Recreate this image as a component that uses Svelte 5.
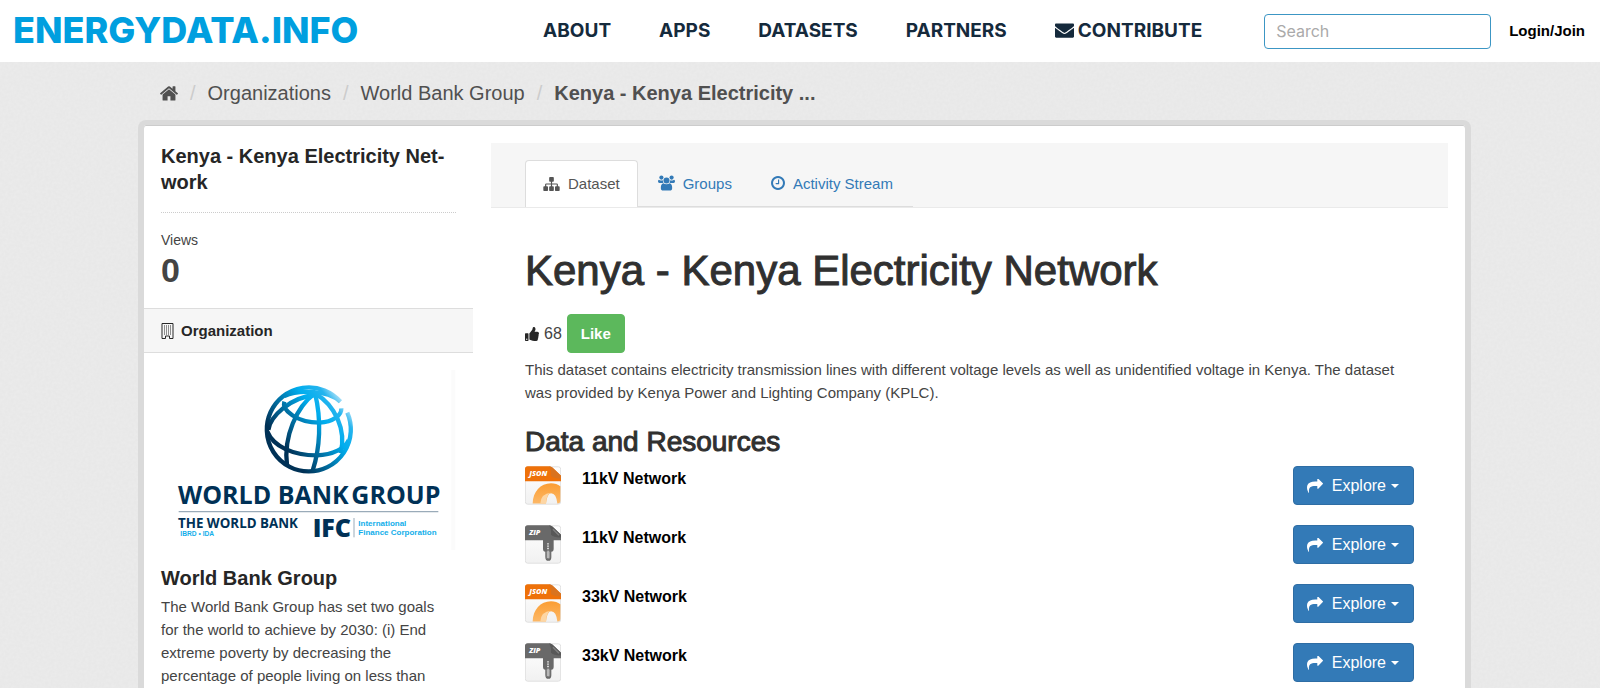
<script>
  const links = ['ABOUT', 'APPS', 'DATASETS', 'PARTNERS'];
  const resources = [
    { type: 'JSON', name: '11kV Network' },
    { type: 'ZIP', name: '11kV Network' },
    { type: 'JSON', name: '33kV Network' },
    { type: 'ZIP', name: '33kV Network' }
  ];
</script>

<div class="page">
  <header>
    <a class="brand" href="#home">ENERGYDATA.INFO</a>
    <nav aria-label="Main">
      {#each links as link}
        <a href="#{link.toLowerCase()}">{link}</a>
      {/each}
      <a href="#contribute">
        <svg class="mail" viewBox="0 0 512 512" aria-hidden="true"><path d="M502.3 190.8c3.900-3.100 9.700-.2 9.700 4.700V416c0 18-14 32-32 32H32c-18 0-32-14-32-32V195.600c0-5 5.700-7.800 9.700-4.700 22.400 17.400 52.100 39.500 154.100 113.600 21.100 15.400 56.700 47.800 92.200 47.600 35.700.3 72-32.800 92.300-47.600 102-74.100 131.600-96.300 154-113.700zM256 320c23.200.4 56.600-29.200 73.400-41.400 132.700-96.300 142.800-104.700 173.400-128.700 5.800-4.500 9.200-11.500 9.200-18.900V96c0-18-14-32-32-32H32C14 64 0 78 0 96v35c0 7.400 3.400 14.300 9.200 18.900 30.600 23.900 40.700 32.400 173.400 128.700 16.800 12.200 50.200 41.800 73.400 41.400z" /></svg>
        CONTRIBUTE
      </a>
    </nav>
    <input type="search" aria-label="Search" placeholder="Search" />
    <a class="login" href="#login">Login/Join</a>
  </header>

  <div class="body">
    <nav class="crumbs" aria-label="Breadcrumb">
      <a href="#home" aria-label="Home">
        <svg viewBox="90 240 1612 1320" aria-hidden="true"><path d="M1472 992v480q0 26-19 45t-45 19h-384v-384h-256v384h-384q-26 0-45-19t-19-45v-480q0-1 .5-3t.5-3l575-474 575 474q1 2 1 6zm223-69l-62 74q-8 9-21 11h-3q-13 0-21-7l-692-577-692 577q-12 8-24 7-13-2-21-11l-62-74q-8-10-7-23.500t11-21.500l719-599q32-26 76-26t76 26l244 204v-195q0-14 9-23t23-9h192q14 0 23 9t9 23v408l219 182q10 8 11 21.500t-7 23.500z" /></svg>
      </a>
      <span class="slash">/</span>
      <a href="#organizations">Organizations</a>
      <span class="slash">/</span>
      <a href="#world-bank">World Bank Group</a>
      <span class="slash">/</span>
      <a class="current" href="#dataset">Kenya - Kenya Electricity ...</a>
    </nav>

    <div class="card">
      <aside>
        <section class="summary">
          <h2>Kenya - Kenya Electricity Net-<br />work</h2>
          <dl>
            <dt>Views</dt>
            <dd>0</dd>
          </dl>
        </section>
        <h3 class="bar">
          <svg viewBox="0 0 13 16" aria-hidden="true">
            <path d="M1 .5h11v15H8.500v-2.500h-4v2.500H1z" fill="none" stroke="currentColor" />
            <path d="M3 3h1M5 3h1M7 3h1M9 3h1M3 5h1M5 5h1M7 5h1M9 5h1M3 7h1M5 7h1M7 7h1M9 7h1M3 9h1M5 9h1M7 9h1M9 9h1M3 11h1M5 11h1M7 11h1M9 11h1" stroke="currentColor" />
          </svg>
          Organization
        </h3>
        <section class="org">
          <svg class="logo" viewBox="33 0 885 570" role="img" aria-label="World Bank Group logo">
            <defs>
              <linearGradient id="ocean" x1="360" y1="300" x2="590" y2="120" gradientUnits="userSpaceOnUse">
                <stop offset="0.2" stop-color="#003156" />
                <stop offset="0.68" stop-color="#00adee" />
                <stop offset="0.86" stop-color="#25b4ee" />
                <stop offset="1" stop-color="#d6effb" />
              </linearGradient>
            </defs>
            <g fill="none" stroke="url(#ocean)" stroke-width="13">
              <path d="M571 125A126 126 0 1 0 592 158" />
              <path d="M403 108C440 90 530 88 571 125" />
              <path d="M403 125C395 150 440 188 508 188C550 186 575 165 574 145" />
              <path d="M355 210C360 170 420 112 495 105" />
              <path d="M352 215C370 260 430 286 500 286C550 285 585 265 596 240" />
              <path d="M495 100C440 140 400 230 411 315" />
              <path d="M495 100C515 180 510 265 488 332" />
              <path d="M495 100C555 135 590 210 572 280" />
            </g>
            <g font-family="Open Sans, sans-serif" font-weight="700" fill="#003156">
              <text x="84" y="431" font-size="75">WORLD BANK</text>
              <text x="604" y="431" font-size="75">GROUP</text>
              <text x="84" y="505" font-size="40">THE WORLD BANK</text>
              <text x="488" y="530" font-size="75" font-weight="800">IFC</text>
            </g>
            <path d="M86 455H865" stroke="#9aabb9" stroke-width="4" />
            <path d="M612 474V532" stroke="#9aabb9" stroke-width="3" />
            <g font-family="Liberation Sans, Arial, sans-serif" font-weight="700" fill="#12aeea" font-size="24">
              <text x="91" y="529" font-size="20">IBRD • IDA</text>
              <text x="625" y="497">International</text>
              <text x="625" y="524">Finance Corporation</text>
            </g>
            <path d="M910 30V570" stroke="#fbfbfb" stroke-width="12" />
          </svg>
          <h2>World Bank Group</h2>
          <p>The World Bank Group has set two goals for the world to achieve by 2030: (i) End extreme poverty by decreasing the percentage of people living on less than</p>
        </section>
      </aside>

      <main>
        <nav class="tabs" aria-label="Dataset">
          <div class="tablist">
            <a class="tab active" href="#dataset">
              <svg viewBox="0 128 1792 1536" aria-hidden="true"><path d="M1792 1248v320q0 40-28 68t-68 28h-320q-40 0-68-28t-28-68v-320q0-40 28-68t68-28h96v-192h-512v192h96q40 0 68 28t28 68v320q0 40-28 68t-68 28h-320q-40 0-68-28t-28-68v-320q0-40 28-68t68-28h96v-192h-512v192h96q40 0 68 28t28 68v320q0 40-28 68t-68 28h-320q-40 0-68-28t-28-68v-320q0-40 28-68t68-28h96v-192q0-52 38-90t90-38h512v-192h-96q-40 0-68-28t-28-68v-320q0-40 28-68t68-28h320q40 0 68 28t28 68v320q0 40-28 68t-68 28h-96v192h512q52 0 90 38t38 90v192h96q40 0 68 28t28 68z" /></svg>
              Dataset
            </a>
            <a class="tab" href="#groups">
              <svg viewBox="0 0 18 16" aria-hidden="true">
                <circle cx="3.600" cy="2.300" r="2.200" />
                <circle cx="14.400" cy="2.300" r="2.200" />
                <path d="M5 8H1.500Q0 8 0 6.500 0 4.500 1 4.500c.5 0 1.200.9 2.600.9.700 0 1.200-.1 1.600-.3Q5 6.500 5.800 7.500 5.500 7.700 5 8zM13 8h3.500Q18 8 18 6.500 18 4.500 17 4.500c-.5 0-1.200.9-2.600.9-.7 0-1.200-.1-1.600-.3q.2 1.400-.6 2.400.3.200.8.500z" />
                <circle cx="9" cy="5.300" r="3.200" />
                <path d="M5.700 8.200Q7 9.400 9 9.400t3.300-1.200Q15 8.800 15 13.200 15 16 12.400 16H5.600Q3 16 3 13.200 3 8.800 5.700 8.200z" />
              </svg>
              Groups
            </a>
            <a class="tab clock" href="#activity">
              <svg viewBox="128 128 1536 1536" aria-hidden="true"><path d="M1024 544v448q0 14-9 23t-23 9h-320q-14 0-23-9t-9-23v-64q0-14 9-23t23-9h224v-352q0-14 9-23t23-9h64q14 0 23 9t9 23zm416 352q0-148-73-273t-198-198-273-73-273 73-198 198-73 273 73 273 198 198 273 73 273-73 198-198 73-273zm224 0q0 209-103 385.500t-279.500 279.500-385.500 103-385.500-103-279.500-279.500-103-385.500 103-385.500 279.500-279.500 385.500-103 385.500 103 279.500 279.500 103 385.500z" /></svg>
              Activity Stream
            </a>
          </div>
        </nav>

        <article>
          <h1>Kenya - Kenya Electricity Network</h1>
          <div class="likes">
            <svg viewBox="0 0 512 512" aria-hidden="true"><path d="M104 224H24c-13.255 0-24 10.745-24 24v240c0 13.255 10.745 24 24 24h80c13.255 0 24-10.745 24-24V248c0-13.255-10.745-24-24-24zM64 472c-13.255 0-24-10.745-24-24s10.745-24 24-24 24 10.745 24 24-10.745 24-24 24zM384 81.452c0 42.416-25.970 66.208-33.277 94.548h101.723c33.397 0 59.397 27.746 59.553 58.098.084 17.938-7.546 37.249-19.439 49.197l-.11.11c9.836 23.337 8.237 56.037-9.308 79.469 8.681 25.895-.069 57.704-16.382 74.757 4.298 17.598 2.244 32.575-6.148 44.632C440.202 511.587 389.616 512 346.839 512l-2.845-.001c-48.287-.017-87.806-17.598-119.560-31.725-15.957-7.099-36.821-15.887-52.651-16.178-6.540-.120-11.783-5.457-11.783-11.998v-213.770c0-3.200 1.282-6.271 3.558-8.521 39.614-39.144 56.648-80.587 89.117-113.111 14.804-14.832 20.188-37.236 25.393-58.902C282.515 39.293 291.817 0 312 0c24 0 72 8 72 81.452z" /></svg>
            <span>68</span>
            <button type="button" class="like">Like</button>
          </div>
          <p>This dataset contains electricity transmission lines with different voltage levels as well as unidentified voltage in Kenya. The dataset was provided by Kenya Power and Lighting Company (KPLC).</p>

          <h2>Data and Resources</h2>
          <ul>
            {#each resources as item}
              <li>
                <svg class="file" viewBox="0 0 108 116" aria-hidden="true">
                  <defs>
                    <linearGradient id="ring" x1="0" y1="0" x2="0" y2="1">
                      <stop offset="0" stop-color="#fb9d33" />
                      <stop offset="1" stop-color="#fcb867" />
                    </linearGradient>
                    <linearGradient id="sheet" x1="0" y1="0" x2="0" y2="1">
                      <stop offset="0" stop-color="#ffffff" />
                      <stop offset="1" stop-color="#f1f1f1" />
                    </linearGradient>
                  </defs>
                  <rect x="1" y="2" width="106" height="112" rx="7" fill="url(#sheet)" stroke="#e0e0e0" stroke-width="3" />
                  {#if item.type === 'JSON'}
                    <path d="M23 112C24 76 46 51 78 51Q95 51 106 60V104Q106 112 98 112H97Q94 81 78 81 66 82 63 112z" fill="url(#ring)" />
                    <path d="M46 112Q48 82 78 80 64 84 63 112z" fill="#fdd6a4" />
                    <path d="M0 45V8Q0 0 8 0H72Q78 0 83 5L108 29V45z" fill="#ee7109" />
                    <path d="M72 0Q78 0 83 5L108 29V37Q88 38 78 29 80 12 72 0z" fill="#d9731f" />
                  {:else}
                    <path d="M54 44H86V71Q86 80 79 80V96Q79 107 70 107T61 96V80Q54 80 54 71z" fill="#696969" />
                    <path d="M69 54V78" stroke="#d5d5d5" stroke-width="6" stroke-dasharray="4 3" />
                    <rect x="64" y="76" width="11" height="25" rx="5" fill="#b8b8b8" stroke="#777" stroke-width="3" />
                    <path d="M0 45V8Q0 0 8 0H72Q78 0 83 5L108 29V45z" fill="#696969" />
                    <path d="M72 0Q78 0 83 5L108 29V37Q88 38 78 29 80 12 72 0z" fill="#585858" />
                    <path d="M84 12L102 30" stroke="#808080" stroke-width="4" />
                  {/if}
                  <text x="13" y="31" font-family="Open Sans, sans-serif" font-size="22" font-weight="800" font-style="italic" fill="#fff">{item.type}</text>
                </svg>
                <a href="#resource">{item.name}</a>
                <button type="button" class="explore">
                  <svg viewBox="0 128 1792 1536" aria-hidden="true"><path d="M1792 640q0 26-19 45l-512 512q-19 19-45 19t-45-19-19-45v-256h-224q-98 0-175.500 6t-154 21.500-133 42.500-105.500 69.500-80 101-48.500 138.500-17.500 181q0 55 5 123 0 6 2.500 23.500t2.500 26.500q0 15-8.500 25t-23.500 10q-16 0-28-17-7-9-13-22t-13.500-30-10.500-24q-127-285-127-451 0-199 53-333 162-403 875-403h224v-256q0-26 19-45t45-19 45 19l512 512q19 19 19 45z" /></svg>
                  Explore
                  <span class="caret"></span>
                </button>
              </li>
            {/each}
          </ul>
        </article>
      </main>
    </div>
  </div>
</div>

<style>
  :global(body) {
    margin: 0;
  }

  .page {
    display: flex;
    flex-direction: column;
    min-height: 100vh;
    font-family: 'Liberation Sans', Arial, sans-serif;
    font-size: 15px;
    line-height: 23px;
    color: #444;
  }

  .page *,
  .page {
    box-sizing: border-box;
  }

  a {
    color: inherit;
    text-decoration: none;
  }

  h1,
  h2,
  h3,
  p,
  ul,
  dl,
  dd {
    margin: 0;
    padding: 0;
  }

  svg {
    flex: none;
    fill: currentColor;
  }

  header {
    display: flex;
    align-items: center;
    height: 62px;
    padding: 0 15px 0 13px;
    background: #fff;
    font-family: Inter, sans-serif;
    font-weight: 700;
    color: #152a3c;
  }

  .brand {
    margin-right: auto;
    padding-bottom: 2px;
    color: #009fdf;
    font-size: 36px;
    font-weight: 800;
    line-height: 40px;
  }

  header nav {
    display: flex;
    gap: 48px;
    padding-bottom: 2px;
    font-size: 19px;
  }

  header nav a {
    display: flex;
    align-items: center;
    gap: 4px;
  }

  .mail {
    width: 19px;
    height: 19px;
  }

  header input {
    width: 227px;
    height: 35px;
    margin: 0 18px 0 62px;
    padding: 0 11px;
    border: 1px solid #3c96c4;
    border-radius: 4px;
    background: #fff;
    font-family: Inter, sans-serif;
    font-size: 16px;
  }

  header input::placeholder {
    color: #aaa;
  }

  .login {
    padding-bottom: 2px;
    font-family: 'Liberation Sans', Arial, sans-serif;
    font-size: 15px;
    color: #000;
  }

  .body {
    flex: 1;
    display: flex;
    flex-direction: column;
    padding: 0 129px 0 138px;
    background: #e8e8e8
      url("data:image/svg+xml,%3Csvg xmlns='http://www.w3.org/2000/svg' width='200' height='200'%3E%3Cfilter id='n'%3E%3CfeTurbulence type='fractalNoise' baseFrequency='.35' numOctaves='2' stitchTiles='stitch'/%3E%3CfeColorMatrix values='0 0 0 0 1 0 0 0 0 1 0 0 0 0 1 1 0 0 0 -.3'/%3E%3C/filter%3E%3Crect width='200' height='200' filter='url(%23n)' opacity='.25'/%3E%3C/svg%3E");
  }

  .crumbs {
    display: flex;
    align-items: center;
    gap: 12px;
    height: 58px;
    padding: 4px 22px 0;
    font-size: 20px;
    color: #505050;
  }

  .crumbs a {
    display: flex;
  }

  .crumbs svg {
    width: 18px;
    height: 15px;
  }

  .crumbs .slash {
    color: #ccc;
  }

  .crumbs .current {
    font-weight: 700;
  }

  .card {
    flex: 1;
    display: grid;
    grid-template-columns: 329px 1fr;
    column-gap: 18px;
    padding: 1px 17px 0 0;
    border: 6px solid #dadada;
    border-width: 5px 6px 0;
    border-radius: 8px 8px 0 0;
    background: #fff;
    box-shadow: inset 0 1px #ccc;
  }

  .summary {
    padding: 17px 17px 20px;
  }

  aside h2 {
    font-size: 20px;
    line-height: 26px;
    color: #262626;
  }

  .summary h2 {
    padding-bottom: 17px;
    border-bottom: 1px dotted #ccc;
  }

  dt {
    margin-top: 16px;
    font-size: 14px;
  }

  dd {
    font-size: 34px;
    line-height: 36px;
    font-weight: 700;
  }

  .bar {
    display: flex;
    align-items: center;
    gap: 7px;
    height: 45px;
    padding: 0 17px;
    border: 1px solid #ddd;
    border-width: 1px 0;
    background: #f6f6f6;
    font-size: 15px;
    color: #262626;
  }

  .bar svg {
    width: 13px;
    height: 16px;
  }

  .org {
    padding: 7px 17px 0;
  }

  .logo {
    display: block;
    width: 100%;
    margin-bottom: 15px;
  }

  .org p {
    margin-top: 4px;
    padding-right: 12px;
  }

  main {
    padding-top: 17px;
  }

  .tabs {
    display: flex;
    height: 65px;
    padding: 17px 34px 0;
    border-bottom: 1px solid #eaeaea;
    background: #f6f6f6;
  }

  .tablist {
    display: flex;
    align-items: center;
    border-bottom: 1px solid #ddd;
    font-size: 15px;
    color: #337ab7;
  }

  .tab {
    display: flex;
    align-items: center;
    align-self: stretch;
    gap: 8px;
    padding: 0 20px;
  }

  .tab svg {
    width: 17px;
    height: 16px;
  }

  .tab.clock {
    padding-left: 19px;
  }

  .tab.clock svg {
    width: 14px;
    height: 14px;
  }

  .tab.active {
    margin-bottom: -1px;
    padding: 0 17px 1px;
    border: 1px solid #ddd;
    border-bottom: 0;
    border-radius: 4px 4px 0 0;
    background: #fff;
    color: #555;
  }

  .tab.active svg {
    height: 14px;
  }

  article {
    padding: 38px 34px 0;
  }

  h1,
  article h2 {
    font-weight: 400;
    color: #303030;
    -webkit-text-stroke: 1px #303030;
  }

  h1 {
    font-size: 42px;
    line-height: 50px;
  }

  .likes {
    display: flex;
    align-items: center;
    gap: 5px;
    margin-top: 18px;
    font-size: 16px;
  }

  .likes svg {
    width: 14px;
    height: 14px;
    color: #262626;
  }

  button {
    height: 39px;
    border: 1px solid #2e6da4;
    border-radius: 4px;
    background: #337ab7;
    color: #fff;
    font-family: inherit;
    font-size: 16px;
  }

  .like {
    width: 58px;
    padding: 0;
    border-color: #5cb85c;
    background: #5cb85c;
    font-size: 15px;
    font-weight: 700;
  }

  article p {
    margin-top: 5px;
  }

  article h2 {
    margin: 20px 0 6px;
    font-size: 28px;
    line-height: 36px;
  }

  li {
    display: flex;
    align-items: flex-start;
    height: 59px;
    list-style: none;
  }

  li:last-child {
    height: 39px;
  }

  .file {
    width: 36px;
    height: 39px;
  }

  li a {
    margin: 0 auto 0 21px;
    font-size: 16px;
    line-height: 25px;
    font-weight: 700;
    color: #000;
  }

  .explore {
    display: flex;
    align-items: center;
    padding: 0 14px 0 13px;
  }

  .explore svg {
    width: 16px;
    height: 14px;
    margin-right: 9px;
  }

  .caret {
    margin-left: 5px;
    border: 4px solid transparent;
    border-top-color: #fff;
    border-bottom: 0;
  }
</style>
